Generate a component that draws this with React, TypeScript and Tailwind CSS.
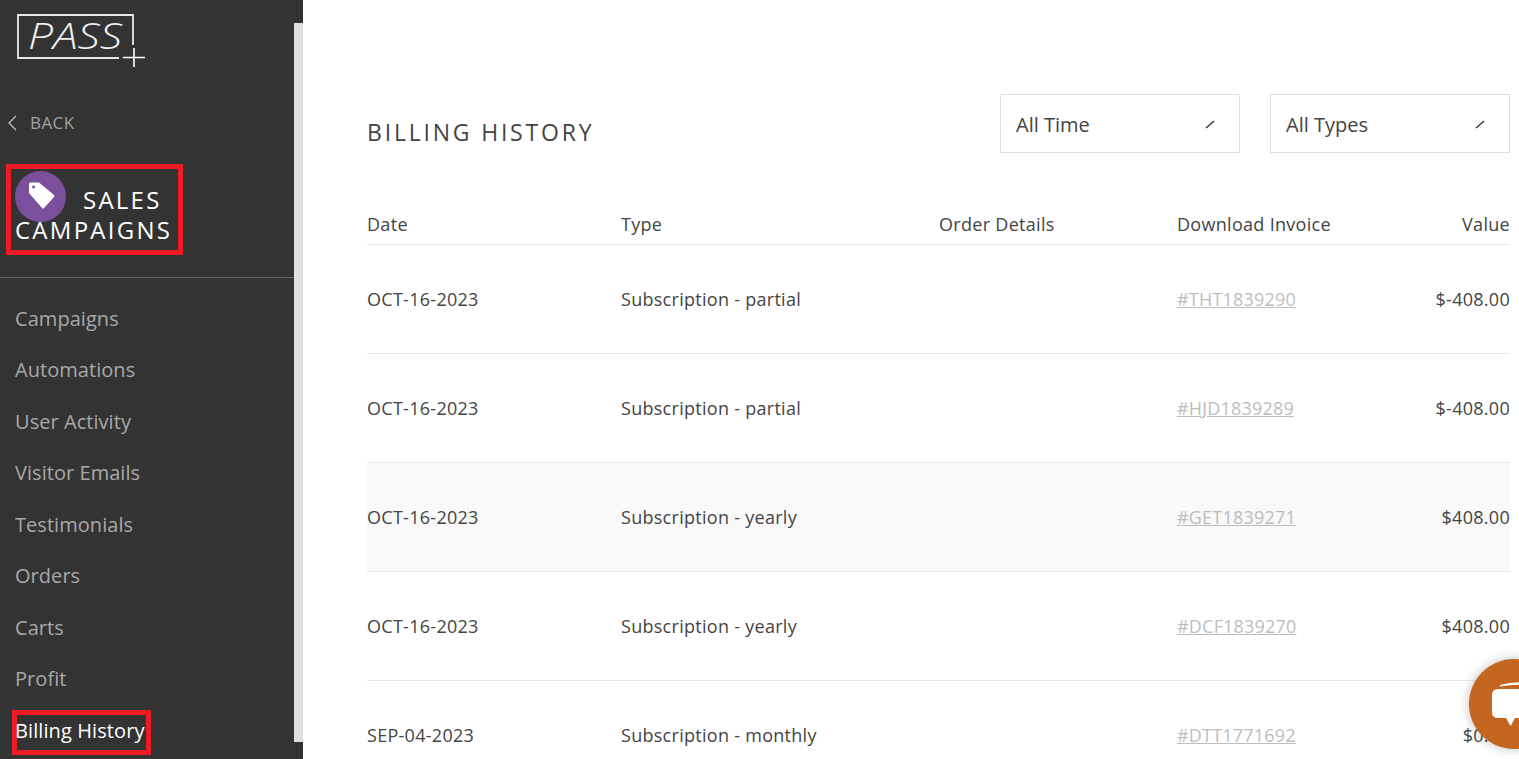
const nav = ["Campaigns", "Automations", "User Activity", "Visitor Emails", "Testimonials", "Orders", "Carts", "Profit"];
const rows = [
  { date: "OCT-16-2023", type: "Subscription - partial", inv: "#THT1839290", val: "$-408.00", hl: false },
  { date: "OCT-16-2023", type: "Subscription - partial", inv: "#HJD1839289", val: "$-408.00", hl: false },
  { date: "OCT-16-2023", type: "Subscription - yearly", inv: "#GET1839271", val: "$408.00", hl: true },
  { date: "OCT-16-2023", type: "Subscription - yearly", inv: "#DCF1839270", val: "$408.00", hl: false },
  { date: "SEP-04-2023", type: "Subscription - monthly", inv: "#DTT1771692", val: "$0.00", hl: false },
];

function Select({ label }: { label: string }) {
  return (
    <div className="flex h-[59px] w-[240px] items-center justify-between border border-[#dfdfdf] pl-[15px] pr-[24px] text-[20px] text-[#444]">
      <span className="pt-[2px]">{label}</span>
      <svg width="10" height="10" viewBox="0 0 10 10"><path d="M1 9 L9 2" stroke="#333" strokeWidth="1.4" /></svg>
    </div>
  );
}

export default function App() {
  return (
    <div className="relative flex h-[759px] w-[1519px] overflow-hidden bg-white font-['Open_Sans',sans-serif]">
      <aside className="flex h-full w-[303px] shrink-0 bg-[#333333]">
        <div className="w-[294px] shrink-0">
          <div className="h-[104px] pl-[16px] pt-[13px]">
            <svg width="132" height="56" viewBox="0 0 132 56" fill="none" className="overflow-visible">
              <path d="M117 32 V2 H2 V45 H103" stroke="#e8e8e8" strokeWidth="1.8" />
              <path d="M107 44.500 H129 M118 35 V54" stroke="#fff" strokeWidth="1.6" />
              <text x="12" y="36" fill="#eee" fontSize="36" fontStyle="italic" fontWeight="300" textLength="94" lengthAdjust="spacingAndGlyphs" fontFamily="'Open Sans',sans-serif">PASS</text>
            </svg>
          </div>
          <div className="flex h-[37px] items-center pl-[7px] text-[17px] tracking-[0.4px] text-[#a3a3a3]">
            <svg width="10" height="16" viewBox="0 0 10 16" fill="none"><path d="M9 1 L2 8 L9 15" stroke="#bbb" strokeWidth="1.4" /></svg>
            <span className="ml-[13px]">BACK</span>
          </div>
          <div className="ml-[6px] mt-[23px] h-[91px] w-[177px] border-[5px] border-[#ed1c24] pl-[4px] pt-[16px] text-[24px] leading-[30px] tracking-[2.250px] text-white">
            <span className="-mb-[13px] -mt-[30px] mr-[17px] inline-flex h-[51px] w-[51px] items-center justify-center rounded-full bg-[#7b4f9b] align-[-2px]">
              <svg width="30" height="30" viewBox="0 0 30 30">
                <path fillRule="evenodd" fill="#fff" d="M3 3 Q3 1.500 4.500 1.500 L13 1.500 L28 14 Q29 15 28 16 L18 27 Q17 28 16 27 L3 12 Z M7.500 4.500 A1.500 1.500 0 1 0 7.600 7.500 A1.500 1.500 0 1 0 7.500 4.500 Z" />
              </svg>
            </span>
            SALES CAMPAIGNS
          </div>
          <div className="mt-[22px] border-t border-[#666]" />
          <nav className="pt-[14.900px] text-[20px] tracking-[0.05px] text-[#a8a8a8]">
            {nav.map((n) => (
              <div key={n} className="flex h-[51.500px] items-center pl-[15px]">{n}</div>
            ))}
            <div className="ml-[12px] mt-[5.100px] flex h-[45px] w-[139px] items-center border-[5px] border-[#ed1c24] tracking-[0.1px] text-white">
              <span className="-mt-[2px] -ml-[2px] whitespace-nowrap">Billing History</span>
            </div>
          </nav>
        </div>
        <div className="mt-[23px] h-[719px] w-[9px] bg-[#e0e0e0]" />
      </aside>

      <main className="min-w-0 flex-1 pl-[64px] pr-[9px] pt-[94px] text-[#444]">
        <div className="flex items-center justify-between">
          <h1 className="pt-[16px] text-[23px] font-normal leading-[40px] tracking-[2.800px]">BILLING HISTORY</h1>
          <div className="flex gap-[30px]">
            <Select label="All Time" />
            <Select label="All Types" />
          </div>
        </div>
        <div className="mt-[52px] grid h-[40px] grid-cols-[254px_318px_238px_1fr_auto] border-b border-[#e8e8e8] text-[18px] leading-[38px] tracking-[0.3px]">
          <span>Date</span>
          <span>Type</span>
          <span>Order Details</span>
          <span>Download Invoice</span>
          <span>Value</span>
        </div>
        {rows.map((r) => (
          <div key={r.inv} className={`grid h-[109px] grid-cols-[254px_318px_238px_1fr_auto] items-center border-b border-[#e8e8e8] text-[18px] tracking-[0.28px] ${r.hl ? "bg-[#f9f9f9]" : ""}`}>
            <span>{r.date}</span>
            <span>{r.type}</span>
            <span />
            <span className="tracking-[0.2px] text-[#bdbdbd] underline">{r.inv}</span>
            <span>{r.val}</span>
          </div>
        ))}
      </main>

      <div className="absolute left-[1469px] top-[659px] h-[90px] w-[90px] rounded-full bg-[#c4661f] shadow-[0_0_12px_rgba(0,0,0,0.25)]">
        <svg className="absolute left-[20px] top-[22px]" width="70" height="46" viewBox="0 0 70 46" fill="#fff">
          <path d="M11 4 Q30 -1 50 3 L50 5 Q30 2 11 5.500 Z" />
          <path d="M9 8 H60 V37 H26 L21.500 45 L17 37 H9 Q3 37 3 31 V14 Q3 8 9 8 Z" />
        </svg>
      </div>
    </div>
  );
}
